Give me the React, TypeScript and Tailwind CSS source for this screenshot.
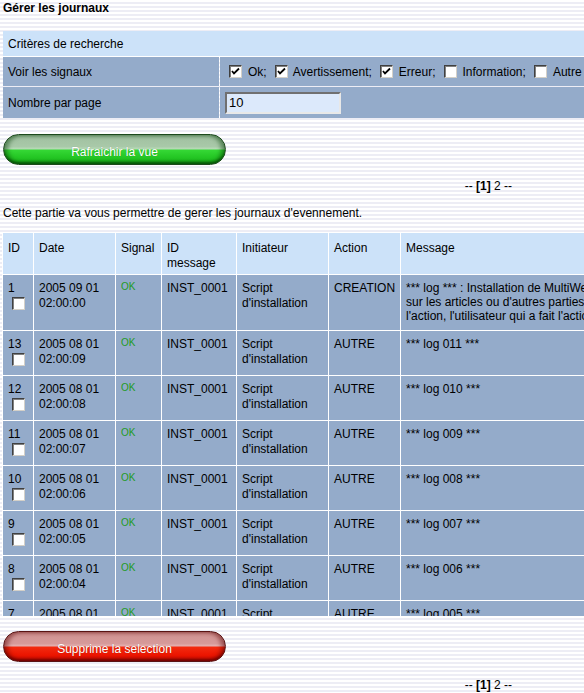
import React from "react";

type Row = { id: string; date: string; time: string; action: string; msg: string[] };

const rows: Row[] = [
  {
    id: "1",
    date: "2005 09 01",
    time: "02:00:00",
    action: "CREATION",
    msg: [
      "*** log *** : Installation de MultiWeb. Ce journal vous permet de suivre les actions",
      "sur les articles ou d'autres parties du site. Il indique la date de",
      "l'action, l'utilisateur qui a fait l'action et le resultat de l'action.",
    ],
  },
  { id: "13", date: "2005 08 01", time: "02:00:09", action: "AUTRE", msg: ["*** log 011 ***"] },
  { id: "12", date: "2005 08 01", time: "02:00:08", action: "AUTRE", msg: ["*** log 010 ***"] },
  { id: "11", date: "2005 08 01", time: "02:00:07", action: "AUTRE", msg: ["*** log 009 ***"] },
  { id: "10", date: "2005 08 01", time: "02:00:06", action: "AUTRE", msg: ["*** log 008 ***"] },
  { id: "9", date: "2005 08 01", time: "02:00:05", action: "AUTRE", msg: ["*** log 007 ***"] },
  { id: "8", date: "2005 08 01", time: "02:00:04", action: "AUTRE", msg: ["*** log 006 ***"] },
  { id: "7", date: "2005 08 01", time: "02:00:03", action: "AUTRE", msg: ["*** log 005 ***"] },
  { id: "6", date: "2005 08 01", time: "02:00:02", action: "AUTRE", msg: ["*** log 004 ***"] },
];

function Check({ on = false }: { on?: boolean }) {
  return (
    <span className="inline-flex h-[13px] w-[13px] shrink-0 items-center justify-center border-t border-l border-t-[#404040] border-l-[#404040] border-b border-r border-b-[#d4d0c8] border-r-[#d4d0c8] bg-white shadow-[inset_1px_1px_0_#808080]">
      {on && (
        <svg width="9" height="9" viewBox="0 0 9 9">
          <path d="M1 4 L3 6.5 L8 1.5" stroke="#000" strokeWidth="1.8" fill="none" />
        </svg>
      )}
    </span>
  );
}

function Pager() {
  return (
    <div className="flex justify-end pr-[72px] leading-[16px]">
      <span>
        -- <b>[1]</b> 2 --
      </span>
    </div>
  );
}

function Pill({ label, tone }: { label: string; tone: "green" | "red" }) {
  const cls =
    tone === "green"
      ? "border-[#1d4a1d] bg-[linear-gradient(to_bottom,#9fbf9f_0%,#a9c9a9_40%,#b8dcb8_48%,#35d835_52%,#22c422_80%,#179a17_100%)] shadow-[inset_4px_0_4px_rgba(0,60,0,0.45),inset_-4px_0_4px_rgba(0,60,0,0.45),inset_0_-2px_2px_rgba(0,60,0,0.5)]"
      : "border-[#5a1414] bg-[linear-gradient(to_bottom,#cf9090_0%,#d69a9a_40%,#e5b0b0_48%,#f22a10_52%,#ec1500_80%,#b80c00_100%)] shadow-[inset_4px_0_4px_rgba(90,0,0,0.45),inset_-4px_0_4px_rgba(90,0,0,0.45),inset_0_-2px_2px_rgba(90,0,0,0.5)]";
  return (
    <div className="px-[3px]">
      <button
        className={`flex h-[31px] w-[223px] items-center justify-center rounded-full border pt-[5px] text-[12px] text-white [text-shadow:0_0_1px_rgba(0,0,0,0.3)] ${cls}`}
      >
        {label}
      </button>
    </div>
  );
}

export default function App() {
  return (
    <div className="h-[693px] w-[584px] overflow-hidden bg-[repeating-linear-gradient(to_bottom,#ffffff_0px,#ffffff_2px,#ededf5_2px,#ededf5_4px)] font-['Liberation_Sans',Arial,sans-serif] text-[12px] text-black">
      <div className="px-[3px] pt-[1px] font-bold leading-[15px]">Gérer les journaux</div>

      <table className="ml-[2px] mt-[14px] w-[660px] table-fixed border-separate border-spacing-[1px] whitespace-nowrap">
        <colgroup>
          <col className="w-[216px]" />
          <col />
        </colgroup>
        <tbody>
          <tr>
            <td colSpan={2} className="h-[25px] bg-[#cce2f9] px-[5px] align-middle">
              Critères de recherche
            </td>
          </tr>
          <tr>
            <td className="h-[29px] bg-[#94abca] px-[5px] align-middle">Voir les signaux</td>
            <td className="bg-[#94abca] px-[5px] align-middle">
              <div className="flex items-center">
                <span className="ml-[4px] mr-[6px] flex"><Check on /></span>
                <span className="mr-[4px]">Ok;</span>
                <span className="ml-[4px] mr-[5px] flex"><Check on /></span>
                <span className="mr-[4px]">Avertissement;</span>
                <span className="ml-[4px] mr-[6px] flex"><Check on /></span>
                <span className="mr-[4px]">Erreur;</span>
                <span className="ml-[4px] mr-[6px] flex"><Check /></span>
                <span className="mr-[4px]">Information;</span>
                <span className="ml-[4px] mr-[6px] flex"><Check /></span>
                <span>Autre</span>
              </div>
            </td>
          </tr>
          <tr>
            <td className="h-[31px] bg-[#94abca] px-[5px] align-middle">Nombre par page</td>
            <td className="bg-[#94abca] px-[5px] align-middle">
              <div className="flex h-[22px] w-[116px] items-center border-2 border-t-[#707070] border-l-[#707070] border-b-[#e8e8e8] border-r-[#e8e8e8] bg-[#dce9fb] px-[2px] text-[13px]">
                10
              </div>
            </td>
          </tr>
        </tbody>
      </table>

      <div className="mt-[15px]">
        <Pill label="Rafraichir la vue" tone="green" />
      </div>

      <div className="mt-[13px]">
        <Pager />
      </div>

      <div className="mt-[11px] px-[3px] leading-[16px]">
        Cette partie va vous permettre de gerer les journaux d'evennement.
      </div>

      <div className="mt-[11px] h-[384px] overflow-hidden">
        <table className="ml-[2px] w-[860px] table-fixed border-separate border-spacing-[1px] bg-white leading-[15px]">
          <thead>
            <tr className="bg-[#cce2f9] text-left align-top">
              <th className="h-[41px] w-[30px] px-[5px] pt-[8px] font-normal">ID</th>
              <th className="w-[81px] px-[5px] pt-[8px] font-normal">Date</th>
              <th className="w-[45px] px-[5px] pt-[8px] font-normal">Signal</th>
              <th className="w-[74px] px-[5px] pt-[8px] font-normal">
                ID
                <br />
                message
              </th>
              <th className="w-[91px] px-[5px] pt-[8px] font-normal">Initiateur</th>
              <th className="w-[71px] px-[5px] pt-[8px] font-normal">Action</th>
              <th className="px-[5px] pt-[8px] font-normal">Message</th>
            </tr>
          </thead>
          <tbody>
            {rows.map((r, i) => (
              <tr key={r.id} className="bg-[#94abca] align-top">
                <td className={`${i === 0 ? "h-[55px]" : "h-[44px]"} px-[5px] pt-[6px]`}>
                  <div>{r.id}</div>
                  <div className="ml-[4px] mt-[1px] flex">
                    <Check />
                  </div>
                </td>
                <td className="px-[5px] pt-[6px]">
                  {r.date}
                  <br />
                  {r.time}
                </td>
                <td className="px-[5px] pt-[4px] text-[10px] text-[#1f9a1f]">OK</td>
                <td className="px-[5px] pt-[6px]">INST_0001</td>
                <td className="px-[5px] pt-[6px]">
                  Script
                  <br />
                  d'installation
                </td>
                <td className="px-[5px] pt-[6px]">{r.action}</td>
                <td className="whitespace-nowrap px-[5px] pt-[6px] leading-[14px]">
                  {r.msg.map((m, k) => (
                    <div key={k}>{m}</div>
                  ))}
                </td>
              </tr>
            ))}
          </tbody>
        </table>
      </div>

      <div className="mt-[15px]">
        <Pill label="Supprime la selection" tone="red" />
      </div>

      <div className="mt-[15px]">
        <Pager />
      </div>
    </div>
  );
}
